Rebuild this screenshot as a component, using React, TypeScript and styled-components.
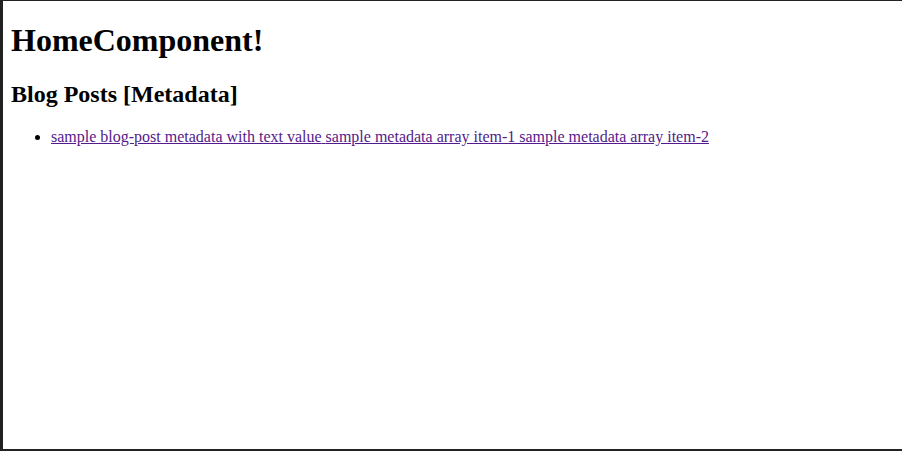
import React, { FC } from "react";
import styled, { createGlobalStyle } from "styled-components";

const GlobalStyle = createGlobalStyle`
  html, body {
    margin: 0;
    padding: 0;
    background: #ffffff;
  }
  body {
    font-family: "Liberation Serif", "Times New Roman", serif;
    color: #000000;
  }
`;

export const FrameEl = styled.div`
  box-sizing: border-box;
  width: 902px;
  height: 451px;
  border-left: 3px solid #222222;
  border-top: 1px solid #222222;
  border-bottom: 2px solid #222222;
  padding: 0 8px;
  overflow: hidden;
`;

export const TitleEl = styled.h1`
  font-size: 32px;
  font-weight: bold;
  margin: 21.44px 0;
`;

export const SubTitleEl = styled.h2`
  font-size: 24px;
  font-weight: bold;
  margin: 19.92px 0;
`;

export const PostListEl = styled.ul`
  margin: 16px 0;
  padding-left: 40px;
  list-style: disc;
  font-size: 16px;
`;

export const PostLinkEl = styled.a`
  color: #551a8b;
  text-decoration: underline;
`;

interface IPost {
  slug: string;
  title: string;
  items: string[];
}

const App: FC = () => {
  const posts: IPost[] = [
    {
      slug: "sample-blog-post",
      title: "sample blog-post metadata with text value",
      items: ["sample metadata array item-1", "sample metadata array item-2"],
    },
  ];
  return (
    <>
      <GlobalStyle />
      <FrameEl>
        <TitleEl>HomeComponent!</TitleEl>
        <SubTitleEl>Blog Posts [Metadata]</SubTitleEl>
        <PostListEl>
          {posts.map((post: IPost) => (
            <li key={post.slug}>
              <PostLinkEl href={"#" + post.slug}>
                {post.title} {post.items.join(" ")}
              </PostLinkEl>
            </li>
          ))}
        </PostListEl>
      </FrameEl>
    </>
  );
};

export default App;
